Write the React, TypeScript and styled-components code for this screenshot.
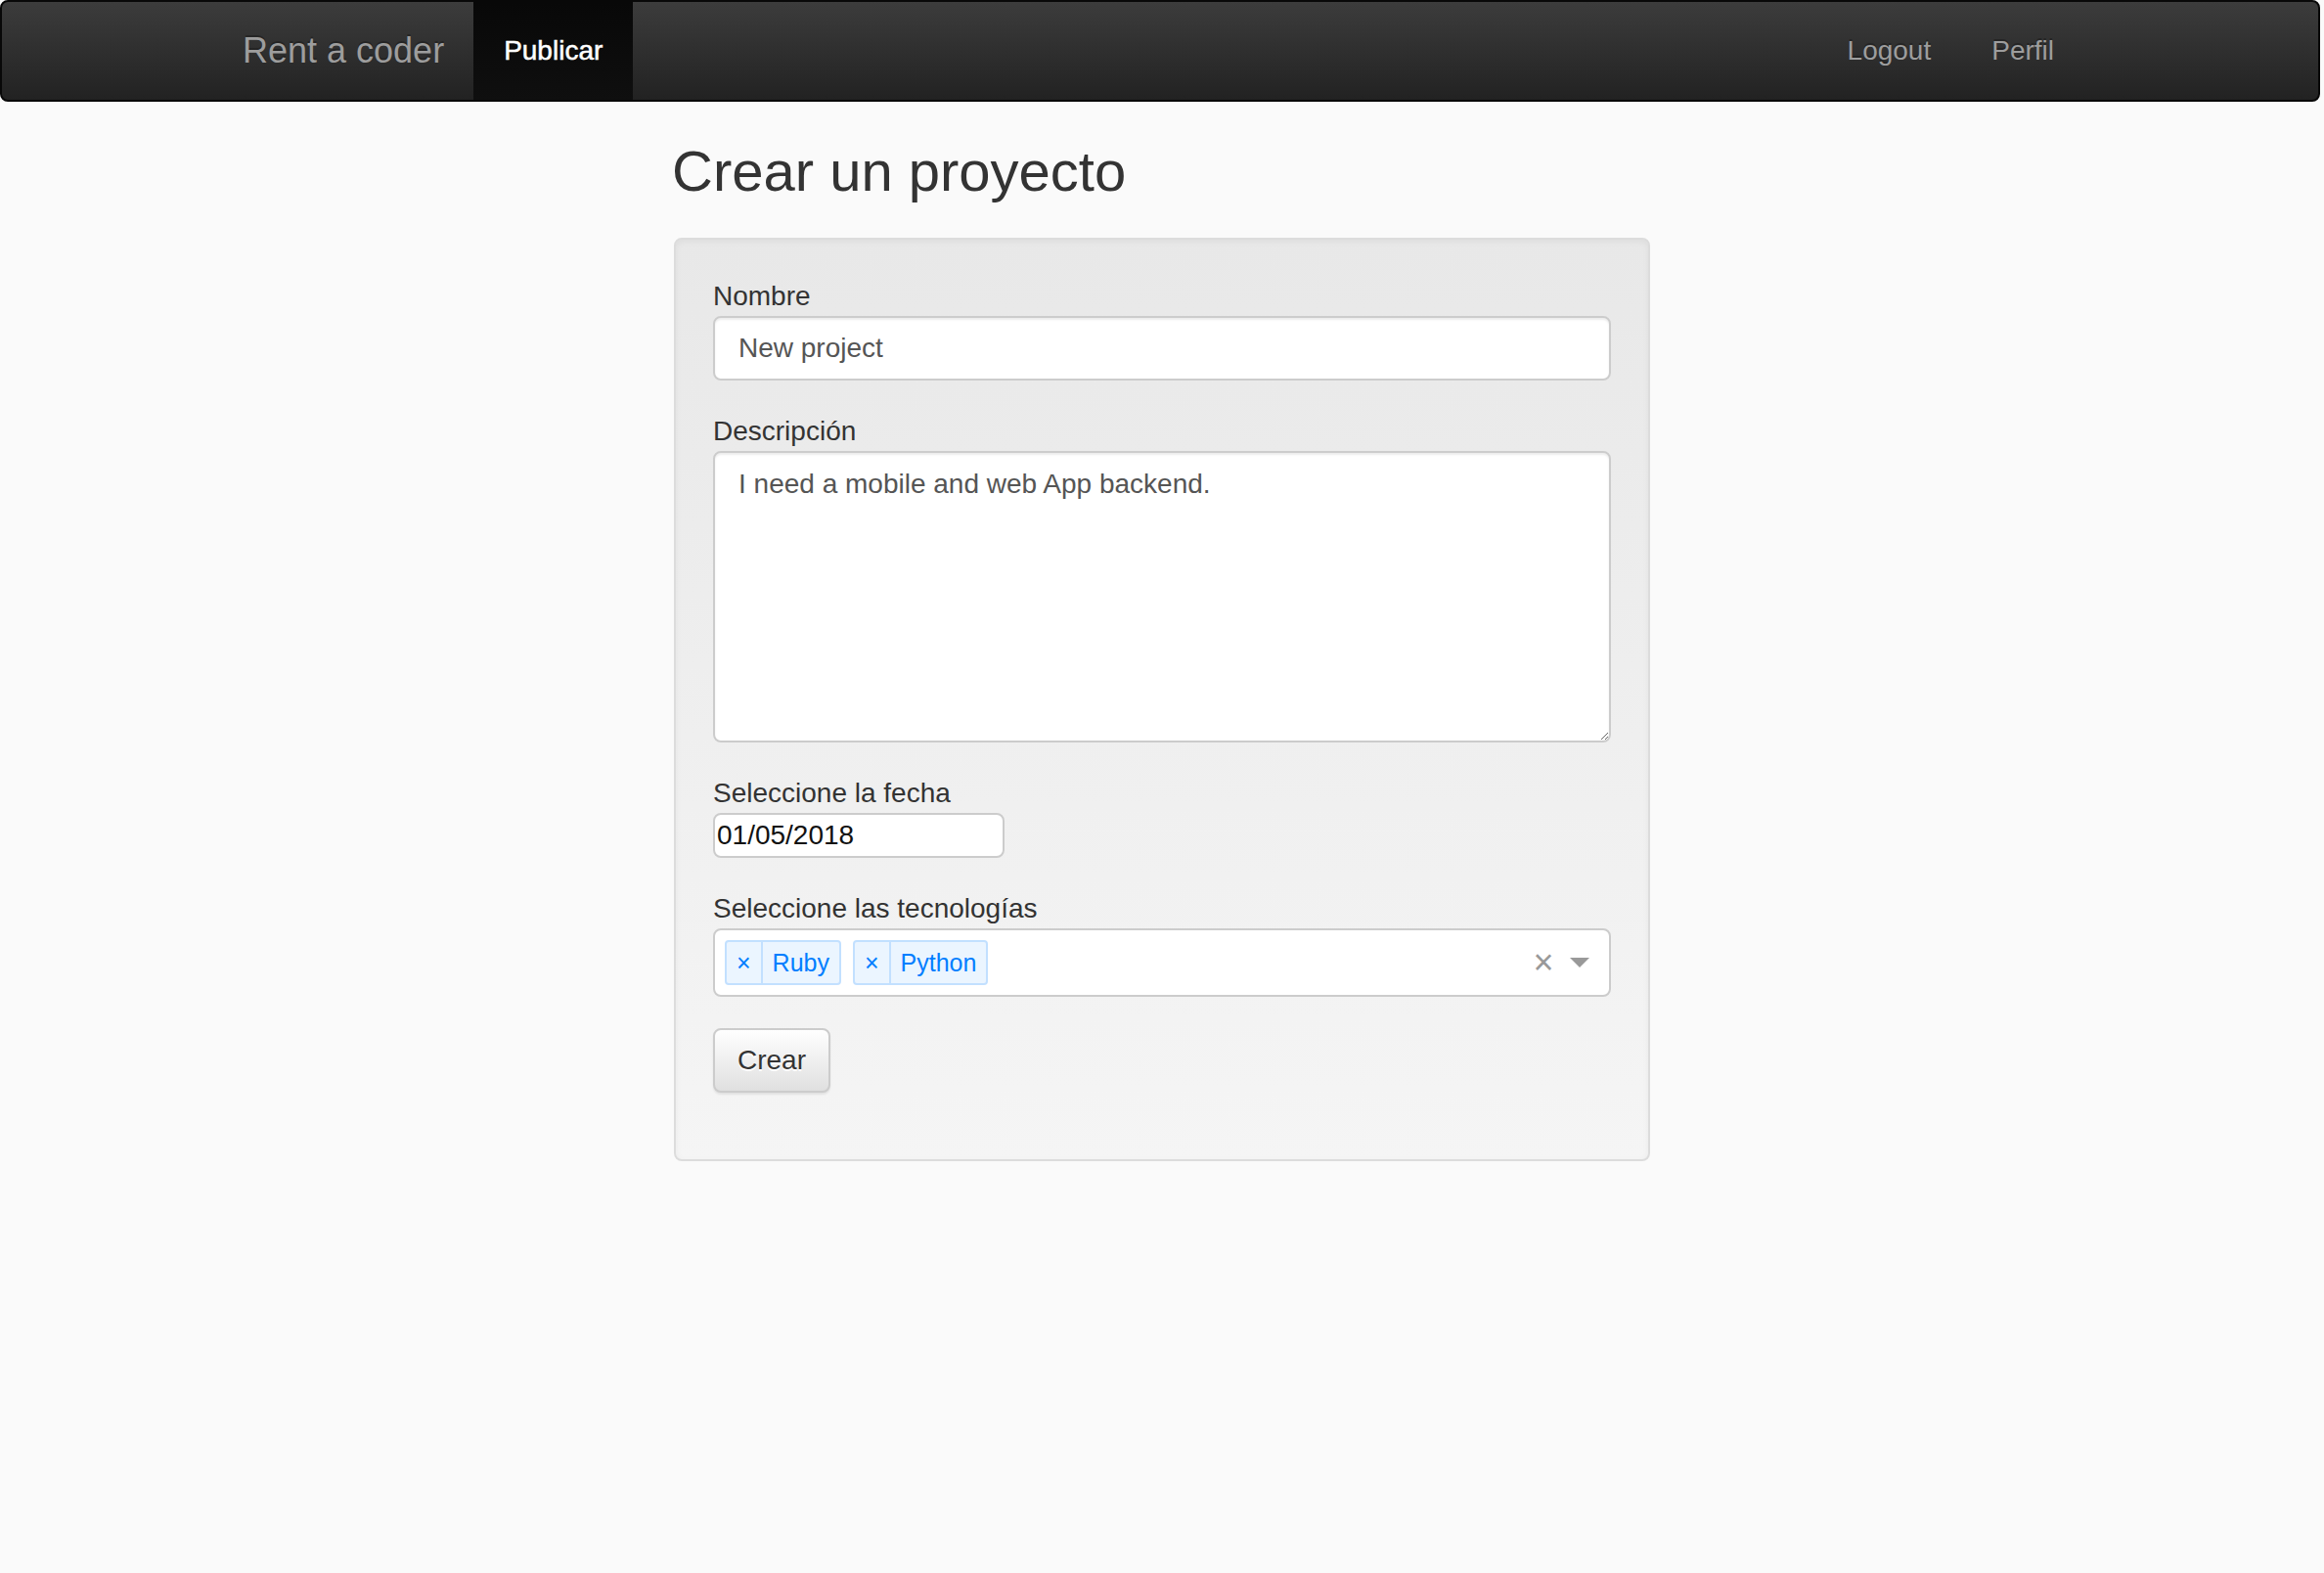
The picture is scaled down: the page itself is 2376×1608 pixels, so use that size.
import React from "react";
import styled, { createGlobalStyle } from "styled-components";

const GlobalStyle = createGlobalStyle`
  html, body {
    margin: 0;
    padding: 0;
    background: #fafafa;
  }
  body {
    font-family: "Liberation Sans", Arial, Helvetica, sans-serif;
    font-size: 28px;
    line-height: 40px;
    color: #333;
  }
  * {
    box-sizing: border-box;
  }
`;

const Navbar = styled.nav`
  height: 104px;
  margin-right: 4px;
  border: 2px solid #080808;
  border-radius: 8px;
  background-image: linear-gradient(to bottom, #3c3c3c 0, #222 100%);
`;

const NavContainer = styled.div`
  display: flex;
  width: 1940px;
  height: 100%;
  margin: 0 auto;
  padding: 0 30px;
`;

const Brand = styled.a`
  display: block;
  height: 100px;
  margin-left: -28px;
  padding: 30px;
  font-size: 36px;
  line-height: 40px;
  color: #9d9d9d;
  text-decoration: none;
  text-shadow: 0 -2px 0 rgba(0, 0, 0, 0.25);
`;

const NavList = styled.ul<{ $right?: boolean }>`
  display: flex;
  margin: 0;
  margin-left: ${(p) => (p.$right ? "auto" : "0")};
  margin-right: ${(p) => (p.$right ? "-5px" : "0")};
  padding: 0;
  list-style: none;
`;

const NavLink = styled.a<{ $active?: boolean }>`
  display: block;
  height: 100px;
  padding: 30px 31px;
  font-size: 28px;
  line-height: 40px;
  text-decoration: none;
  color: ${(p) => (p.$active ? "#fff" : "#9d9d9d")};
  background-image: ${(p) =>
    p.$active ? "linear-gradient(to bottom, #080808 0, #0f0f0f 100%)" : "none"};
  -webkit-text-stroke: ${(p) => (p.$active ? "0.5px #fff" : "0")};
  text-shadow: 0 -2px 0 rgba(0, 0, 0, 0.25);
`;

const Main = styled.main`
  width: 998px;
  margin: 0 auto;
`;

const Heading = styled.h2`
  margin: 38px 0 35px -2px;
  font-size: 58px;
  line-height: 66px;
  font-weight: 500;
  color: #333;
`;

const Well = styled.div`
  padding: 38px;
  border: 2px solid #dcdcdc;
  border-radius: 8px;
  background-image: linear-gradient(to bottom, #e8e8e8 0, #f5f5f5 100%);
  box-shadow: inset 0 2px 6px rgba(0, 0, 0, 0.05), 0 2px 0 rgba(255, 255, 255, 0.1);
`;

const FormGroup = styled.div<{ $last?: boolean }>`
  margin-bottom: ${(p) => (p.$last ? "30px" : "32px")};
`;

const Label = styled.label`
  display: block;
  margin: 0;
  font-size: 28px;
  line-height: 40px;
  color: #333;
`;

const fieldBase = `
  display: block;
  width: 100%;
  padding: 12px 24px;
  font-family: "Liberation Sans", Arial, Helvetica, sans-serif;
  font-size: 28px;
  line-height: 40px;
  color: #555;
  background: #fff;
  border: 2px solid #ccc;
  border-radius: 8px;
  box-shadow: inset 0 2px 2px rgba(0, 0, 0, 0.075);
  outline: none;
`;

const TextInput = styled.input`
  ${fieldBase}
  height: 66px;
`;

const TextArea = styled.textarea`
  ${fieldBase}
  height: 298px;
  resize: vertical;
`;

const DateInput = styled.input`
  display: block;
  width: 298px;
  height: 46px;
  padding: 0 2px;
  font-family: "Liberation Sans", Arial, Helvetica, sans-serif;
  font-size: 28px;
  color: #111;
  background: #fff;
  border: 2px solid #ccc;
  border-radius: 8px;
  outline: none;
`;

const SelectControl = styled.div`
  display: flex;
  align-items: center;
  height: 70px;
  padding-left: 10px;
  background: #fff;
  border: 2px solid #ccc;
  border-radius: 8px;
`;

const Tags = styled.div`
  display: flex;
  flex: 1;
  gap: 12px;
`;

const Tag = styled.div`
  display: flex;
  height: 46px;
  font-size: 25px;
  line-height: 42px;
  color: #007eff;
  background: #ebf5ff;
  border: 2px solid #c2e0ff;
  border-radius: 4px;
`;

const TagIcon = styled.span`
  padding: 0 10px;
  border-right: 2px solid #c2e0ff;
  cursor: pointer;
`;

const TagLabel = styled.span`
  padding: 0 10px;
`;

const ClearZone = styled.span`
  width: 34px;
  font-size: 36px;
  line-height: 1;
  text-align: center;
  color: #999;
  cursor: pointer;
`;

const ArrowZone = styled.span`
  display: flex;
  justify-content: center;
  width: 50px;
  padding-right: 10px;
  padding-top: 5px;
`;

const Arrow = styled.span`
  width: 0;
  height: 0;
  border-style: solid;
  border-width: 10px 10px 5px;
  border-color: #999 transparent transparent;
`;

const Button = styled.button`
  height: 66px;
  padding: 0 23px;
  font-family: "Liberation Sans", Arial, Helvetica, sans-serif;
  font-size: 28px;
  line-height: 40px;
  color: #333;
  border: 2px solid #ccc;
  border-radius: 8px;
  background-image: linear-gradient(to bottom, #fff 0, #e0e0e0 100%);
  text-shadow: 0 2px 0 #fff;
  box-shadow: inset 0 2px 0 rgba(255, 255, 255, 0.15), 0 2px 2px rgba(0, 0, 0, 0.075);
  cursor: pointer;
`;

const technologies = ["Ruby", "Python"];

function App() {
  return (
    <>
      <GlobalStyle />
      <Navbar>
        <NavContainer>
          <Brand href="#">Rent a coder</Brand>
          <NavList>
            <li>
              <NavLink href="#" $active>
                Publicar
              </NavLink>
            </li>
          </NavList>
          <NavList $right>
            <li>
              <NavLink href="#">Logout</NavLink>
            </li>
            <li>
              <NavLink href="#">Perfil</NavLink>
            </li>
          </NavList>
        </NavContainer>
      </Navbar>
      <Main>
        <Heading>Crear un proyecto</Heading>
        <Well>
          <form onSubmit={(e) => e.preventDefault()}>
            <FormGroup>
              <Label htmlFor="nombre">Nombre</Label>
              <TextInput id="nombre" type="text" defaultValue="New project" />
            </FormGroup>
            <FormGroup>
              <Label htmlFor="descripcion">Descripción</Label>
              <TextArea
                id="descripcion"
                defaultValue="I need a mobile and web App backend."
              />
            </FormGroup>
            <FormGroup>
              <Label htmlFor="fecha">Seleccione la fecha</Label>
              <DateInput id="fecha" type="text" defaultValue="01/05/2018" />
            </FormGroup>
            <FormGroup>
              <Label>Seleccione las tecnologías</Label>
              <SelectControl>
                <Tags>
                  {technologies.map((t) => (
                    <Tag key={t}>
                      <TagIcon>×</TagIcon>
                      <TagLabel>{t}</TagLabel>
                    </Tag>
                  ))}
                </Tags>
                <ClearZone>×</ClearZone>
                <ArrowZone>
                  <Arrow />
                </ArrowZone>
              </SelectControl>
            </FormGroup>
            <FormGroup $last>
              <Button type="submit">Crear</Button>
            </FormGroup>
          </form>
        </Well>
      </Main>
    </>
  );
}

export default App;
